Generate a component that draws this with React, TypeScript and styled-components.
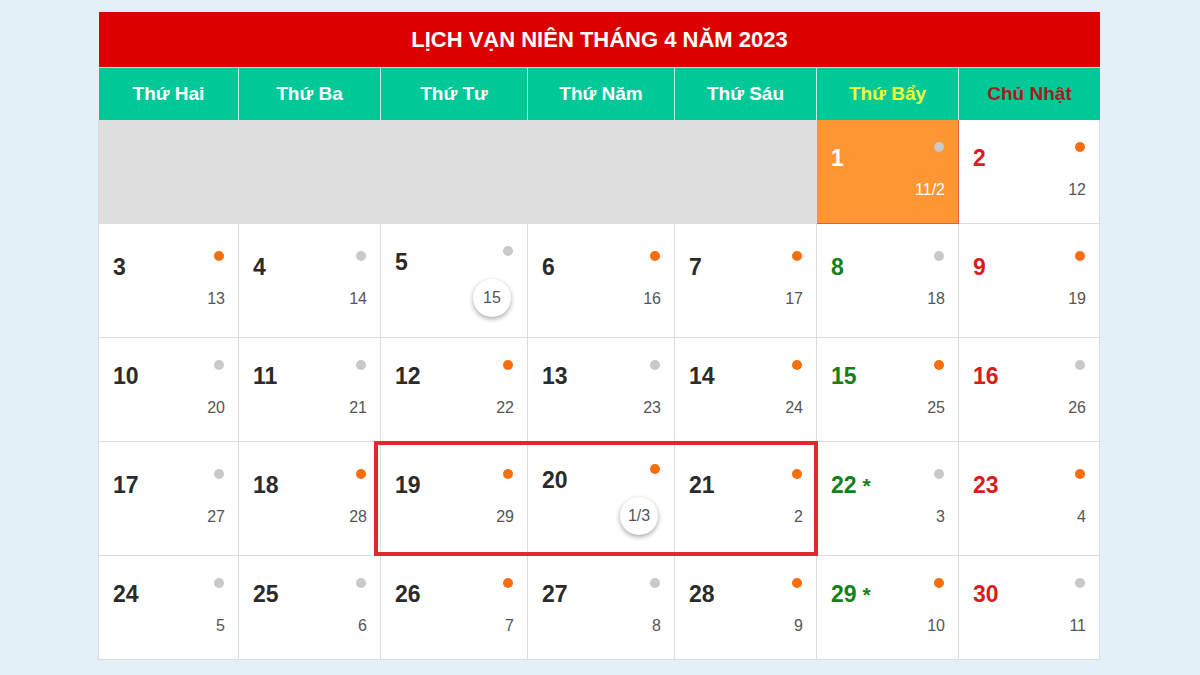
import React from "react";
import styled, { createGlobalStyle } from "styled-components";

const GlobalStyle = createGlobalStyle`
  body {
    margin: 0;
    background: #e3f0f8;
    font-family: "Liberation Sans", Arial, sans-serif;
  }
`;

type Kind = "normal" | "sat" | "sun" | "today";

interface DayData {
  day: number;
  lunar: string;
  dot: "orange" | "gray";
  badge?: boolean;
  star?: boolean;
}

const COLS = "140px 142px 147px 147px 142px 142px 141px";

const Page = styled.div`
  padding: 12px 0 0 98px;
`;

const Calendar = styled.div`
  width: 1002px;
`;

const Title = styled.div`
  height: 55px;
  background: #dd0000;
  color: #ffffff;
  font-size: 22px;
  font-weight: bold;
  display: flex;
  align-items: center;
  justify-content: center;
  border-bottom: 1px solid #f2d6d6;
  margin-left: 1px;
`;

const HeadRow = styled.div`
  display: grid;
  grid-template-columns: ${COLS};
  background: #00c896;
  margin-left: 1px;
`;

const HeadCell = styled.div<{ $color: string }>`
  height: 52px;
  display: flex;
  align-items: center;
  justify-content: center;
  color: ${(p) => p.$color};
  font-size: 19px;
  font-weight: bold;
  border-right: 1px solid #c9f0e4;
  &:last-child {
    border-right: none;
  }
`;

const Body = styled.div`
  display: grid;
  grid-template-columns: ${COLS};
  border-left: 1px solid #d9d9d9;
`;

const Cell = styled.div<{ $col: number; $row: number; $bg: string; $line: string }>`
  grid-column: ${(p) => p.$col};
  grid-row: ${(p) => p.$row};
  background: ${(p) => p.$bg};
  border-right: 1px solid ${(p) => p.$line};
  border-bottom: 1px solid ${(p) => p.$line};
  padding: 23px 14px 20px 14px;
  display: flex;
  flex-direction: column;
  justify-content: center;
  min-height: 60px;
`;

const TopLine = styled.div`
  display: flex;
  justify-content: space-between;
  align-items: flex-start;
  height: 30px;
`;

const numColor: Record<Kind, string> = {
  normal: "#2b2b2b",
  sat: "#14801a",
  sun: "#dc1c1c",
  today: "#ffffff",
};

const DayNum = styled.span<{ $kind: Kind }>`
  font-size: 23px;
  font-weight: bold;
  line-height: 30px;
  color: ${(p) => numColor[p.$kind]};
`;

const Star = styled.span`
  margin-left: 6px;
  font-size: 21px;
`;

const Dot = styled.span<{ $color: string }>`
  width: 10px;
  height: 10px;
  border-radius: 50%;
  background: ${(p) => p.$color};
  margin: -1px 0 0 0;
`;

const LunarLine = styled.div`
  display: flex;
  justify-content: flex-end;
  align-items: center;
  min-height: 30px;
`;

const Lunar = styled.span<{ $light: boolean }>`
  font-size: 16px;
  padding-top: 4px;
  margin-right: -1px;
  color: ${(p) => (p.$light ? "#ffffff" : "#555555")};
`;

const Badge = styled.span`
  width: 38px;
  height: 38px;
  margin: 2px 2px 0 0;
  border-radius: 50%;
  background: #ffffff;
  box-shadow: 0 2px 5px rgba(0, 0, 0, 0.35);
  display: flex;
  align-items: center;
  justify-content: center;
  font-size: 16px;
  color: #555555;
`;

const Highlight = styled.div`
  grid-column: 3 / 6;
  grid-row: 4;
  z-index: 2;
  pointer-events: none;
  border: 4px solid #dc2a2f;
  margin: -1px -1px 0 -7px;
`;

const heads = [
  { name: "Thứ Hai", color: "#ffffff" },
  { name: "Thứ Ba", color: "#ffffff" },
  { name: "Thứ Tư", color: "#ffffff" },
  { name: "Thứ Năm", color: "#ffffff" },
  { name: "Thứ Sáu", color: "#ffffff" },
  { name: "Thứ Bẩy", color: "#f4ff3a" },
  { name: "Chủ Nhật", color: "#a51c1c" },
];

const orangeDays = [2, 3, 6, 7, 9, 12, 14, 15, 18, 19, 20, 21, 23, 26, 28, 29];

const days: DayData[] = Array.from({ length: 30 }, (_, i) => {
  const day = i + 1;
  let lunar = "";
  if (day === 1) lunar = "11/2";
  else if (day <= 19) lunar = String(day + 10);
  else if (day === 20) lunar = "1/3";
  else lunar = String(day - 19);
  return {
    day,
    lunar,
    dot: orangeDays.includes(day) ? "orange" : "gray",
    badge: day === 5 || day === 20,
    star: day === 22 || day === 29,
  };
});

const App: React.FC = () => {
  // April 2023 starts on Saturday (column 6)
  const offset = 5;

  return (
    <>
      <GlobalStyle />
      <Page>
        <Calendar>
          <Title>LỊCH VẠN NIÊN THÁNG 4 NĂM 2023</Title>
          <HeadRow>
            {heads.map((h) => (
              <HeadCell key={h.name} $color={h.color}>
                {h.name}
              </HeadCell>
            ))}
          </HeadRow>
          <Body>
            {Array.from({ length: offset }, (_, i) => (
              <Cell key={"e" + i} $col={i + 1} $row={1} $bg="#dedede" $line="#dedede" />
            ))}
            {days.map((d) => {
              const idx = d.day - 1 + offset;
              const col = (idx % 7) + 1;
              const row = Math.floor(idx / 7) + 1;
              const kind: Kind =
                d.day === 1 ? "today" : col === 6 ? "sat" : col === 7 ? "sun" : "normal";
              const today = kind === "today";
              return (
                <Cell
                  key={d.day}
                  $col={col}
                  $row={row}
                  $bg={today ? "#ff9533" : "#ffffff"}
                  $line={today ? "#d9604a" : "#dddddd"}
                >
                  <TopLine>
                    <DayNum $kind={kind}>
                      {d.day}
                      {d.star && <Star>*</Star>}
                    </DayNum>
                    <Dot $color={d.dot === "orange" ? "#f86e0c" : "#c9c9c9"} />
                  </TopLine>
                  <LunarLine>
                    {d.badge ? <Badge>{d.lunar}</Badge> : <Lunar $light={today}>{d.lunar}</Lunar>}
                  </LunarLine>
                </Cell>
              );
            })}
            <Highlight />
          </Body>
        </Calendar>
      </Page>
    </>
  );
};

export default App;
